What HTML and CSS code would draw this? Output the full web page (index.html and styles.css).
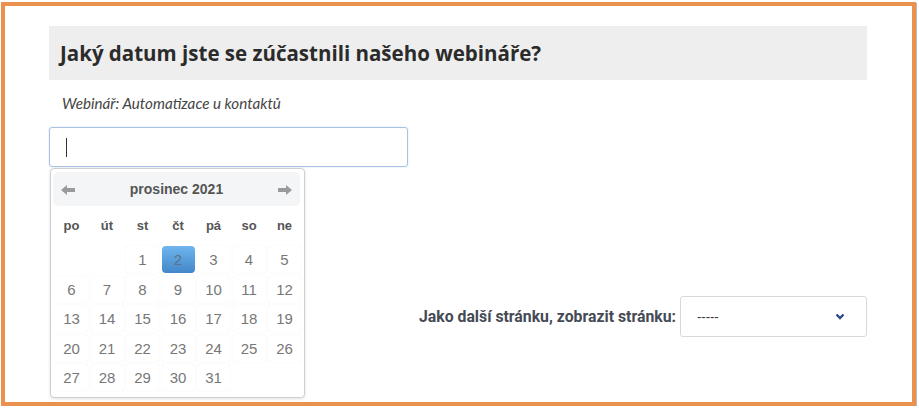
FILE: index.html
```html
<!DOCTYPE html>
<html lang="cs">
<head>
<meta charset="utf-8">
<link rel="stylesheet" href="styles.css">
</head>
<body>
<div class="frame">
  <div class="title-bar"><h1 class="title">Jaký datum jste se zúčastnili našeho webináře?</h1></div>
  <p class="subtitle">Webinář: Automatizace u kontaktů</p>
  <div class="field">
    <div class="input"><span class="caret"></span></div>
    <div class="calendar">
      <div class="cal-head">
        <svg class="arrow" width="14" height="10" viewBox="0 0 14 10"><path d="M0 5 L6 0 L6 3 L14 3 L14 7 L6 7 L6 10 Z" fill="#9a9a9a"/></svg>
        <span class="month">prosinec 2021</span>
        <svg class="arrow" width="14" height="10" viewBox="0 0 14 10"><path d="M14 5 L8 0 L8 3 L0 3 L0 7 L8 7 L8 10 Z" fill="#9a9a9a"/></svg>
      </div>
      <div class="dow">
        <span>po</span><span>út</span><span>st</span><span>čt</span><span>pá</span><span>so</span><span>ne</span>
      </div>
      <div class="days">
        <span class="empty"></span><span class="empty"></span>
        <span class="day">1</span><span class="day active">2</span><span class="day">3</span><span class="day">4</span><span class="day">5</span>
        <span class="day">6</span><span class="day">7</span><span class="day">8</span><span class="day">9</span><span class="day">10</span><span class="day">11</span><span class="day">12</span>
        <span class="day">13</span><span class="day">14</span><span class="day">15</span><span class="day">16</span><span class="day">17</span><span class="day">18</span><span class="day">19</span>
        <span class="day">20</span><span class="day">21</span><span class="day">22</span><span class="day">23</span><span class="day">24</span><span class="day">25</span><span class="day">26</span>
        <span class="day">27</span><span class="day">28</span><span class="day">29</span><span class="day">30</span><span class="day">31</span>
      </div>
    </div>
  </div>
  <div class="next-row">
    <span class="next-label">Jako další stránku, zobrazit stránku:</span>
    <div class="select">
      <span class="select-val">-----</span>
      <svg class="chev" width="10" height="7" viewBox="0 0 10 7"><path d="M1.5 1.5 L5 5 L8.5 1.5" fill="none" stroke="#2b4a8b" stroke-width="2.4"/></svg>
    </div>
  </div>
</div>
</body>
</html>
```
FILE: styles.css
```css
html, body {
  margin: 0;
  padding: 0;
  background: #ffffff;
}
.frame {
  box-sizing: border-box;
  width: 915px;
  height: 404px;
  margin: 2px 0 0 1px;
  border: 4px solid #ea924d;
  box-shadow: 1px 1px 0 #b9b9b9;
  padding: 20px 0 0 44px;
  font-family: "Open Sans", sans-serif;
}
.title-bar {
  box-sizing: border-box;
  width: 818px;
  height: 54px;
  background: #eeeeee;
  display: flex;
  align-items: center;
  padding-left: 11px;
}
.title {
  margin: 0;
  font-family: "Open Sans", sans-serif;
  font-weight: 700;
  font-size: 20.5px;
  color: #2b2b2b;
  letter-spacing: 0;
}
.subtitle {
  margin: 14px 0 0 13px;
  height: 18px;
  line-height: 18px;
  font-family: Lato, sans-serif;
  font-style: italic;
  font-size: 15.2px;
  color: #444;
}
.field {
  position: relative;
  margin-top: 15px;
}
.input {
  box-sizing: border-box;
  width: 359px;
  height: 40px;
  border: 1px solid #a9c2e3;
  border-radius: 3px;
  box-shadow: 0 0 2px rgba(120, 160, 220, 0.35);
  display: flex;
  align-items: center;
  padding-left: 16px;
}
.caret {
  display: block;
  width: 1px;
  height: 19px;
  background: #333;
}
.calendar {
  position: absolute;
  left: 1px;
  top: 41px;
  box-sizing: border-box;
  width: 255px;
  height: 230px;
  background: #fff;
  border: 1px solid #cfcfcf;
  border-radius: 4px;
  box-shadow: 0 1px 3px rgba(0, 0, 0, 0.12);
  padding: 3px 4px 0 2px;
  font-family: "Liberation Sans", Arial, sans-serif;
}
.cal-head {
  height: 34px;
  background: #f4f5f7;
  border-radius: 5px;
  display: flex;
  align-items: center;
  justify-content: space-between;
  padding: 0 8px;
}
.month {
  font-weight: 700;
  font-size: 14px;
  color: #555;
}
.arrow {
  display: block;
  margin-top: 1px;
}
.dow {
  display: grid;
  grid-template-columns: repeat(7, 33px);
  column-gap: 2.5px;
  margin-left: 2px;
  height: 38px;
  align-items: center;
}
.dow span {
  text-align: center;
  font-weight: 700;
  font-size: 13px;
  color: #555;
}
.days {
  display: grid;
  grid-template-columns: repeat(7, 33px);
  grid-auto-rows: 27px;
  gap: 2.5px;
  margin-left: 2px;
  margin-top: 2px;
}
.day {
  display: flex;
  align-items: center;
  justify-content: center;
  font-size: 15px;
  color: #777;
  border-radius: 3px;
  box-shadow: 0 0 1px rgba(0, 0, 0, 0.12);
}
.day.active {
  background: linear-gradient(#6fb5ee, #4287c8);
  color: #5f6f85;
  border-radius: 4px;
  box-shadow: none;
}
.next-row {
  width: 818px;
  display: flex;
  justify-content: flex-end;
  align-items: center;
  margin-top: 129px;
}
.next-label {
  font-family: Roboto, sans-serif;
  font-weight: 700;
  font-size: 15.8px;
  color: #454a55;
  margin-right: 4px;
}
.select {
  box-sizing: border-box;
  width: 187px;
  height: 41px;
  border: 1px solid #d8d8d8;
  border-radius: 3px;
  display: flex;
  align-items: center;
  justify-content: space-between;
  padding: 0 21px 0 16px;
}
.select-val {
  font-family: "Liberation Sans", Arial, sans-serif;
  font-size: 13px;
  color: #333;
}
.chev {
  display: block;
}
```
